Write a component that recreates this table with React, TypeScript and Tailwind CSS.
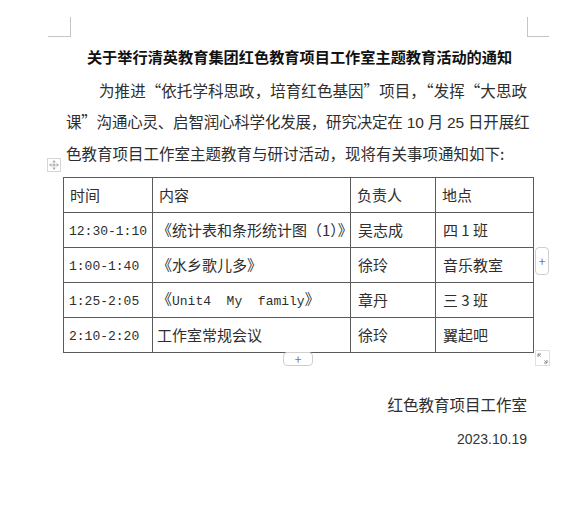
import { Move } from 'lucide-react'

const cjk = "font-['Noto_Sans_CJK_SC',sans-serif]"
const mono = "font-['Liberation_Mono','Noto_Sans_CJK_SC',monospace] text-[13px]"
const latin = "font-['Liberation_Sans',sans-serif]"

interface Row {
  time: string
  content: React.ReactNode
  owner: string
  place: React.ReactNode
}

const rows: Row[] = [
  {
    time: '12:30-1:10',
    content: <>《统计表和条形统计图（1）》</>,
    owner: '吴志成',
    place: <>四 1 班</>,
  },
  { time: '1:00-1:40', content: <>《水乡歌儿多》</>, owner: '徐玲', place: '音乐教室' },
  {
    time: '1:25-2:05',
    content: (
      <>
        《<span className={`${mono} whitespace-pre`}>Unit4  My  family</span>》
      </>
    ),
    owner: '章丹',
    place: <>三 3 班</>,
  },
  { time: '2:10-2:20', content: '工作室常规会议', owner: '徐玲', place: '翼起吧' },
]

function CornerMarks() {
  return (
    <>
      <div className="absolute left-[70px] top-[17px] h-[20px] w-px bg-[#c4c4c4]" />
      <div className="absolute left-[48px] top-[36px] h-px w-[22px] bg-[#c4c4c4]" />
      <div className="absolute left-[527px] top-[17px] h-[20px] w-px bg-[#c4c4c4]" />
      <div className="absolute left-[527px] top-[36px] h-px w-[22px] bg-[#c4c4c4]" />
    </>
  )
}

// Word-style table handles that float over the page
function TableHandles() {
  return (
    <>
      <div className="absolute left-[47px] top-[158px] flex h-[14px] w-[14px] items-center justify-center border border-[#d6d6d6] bg-white text-[#8a8a8a]">
        <Move size={10} strokeWidth={1.6} />
      </div>
      <div className="absolute left-[535px] top-[247px] flex h-[28px] w-[14px] items-center justify-center rounded-sm border border-[#cfcfcf] bg-white text-[12px] leading-none text-[#777]">
        +
      </div>
      <div className="absolute left-[283px] top-[352px] flex h-[14px] w-[30px] items-center justify-center rounded-sm border border-[#cfcfcf] bg-white text-[12px] leading-none text-[#777]">
        +
      </div>
      <div className="absolute left-[535px] top-[350px] flex h-[16px] w-[15px] items-center justify-center border border-[#e0e0e0] bg-white">
        <svg width="11" height="11" viewBox="0 0 11 11" fill="none" stroke="#888" strokeWidth="1">
          <path d="M1 4V1h3M1 1l2.5 2.5M10 7v3H7M10 10L7.5 7.5" />
        </svg>
      </div>
    </>
  )
}

export default function App() {
  return (
    <div className={`relative h-[528px] w-[584px] overflow-hidden bg-white ${cjk} text-[#2e2e2e]`}>
      <CornerMarks />

      <div className="ml-[66px] flex w-[461px] flex-col pt-[44px]">
        <h1 className="pl-[6px] text-center text-[15.2px] font-bold leading-[24px] text-[#111]">
          关于举行清英教育集团红色教育项目工作室主题教育活动的通知
        </h1>

        <div className="mt-[7px] text-[15.5px] leading-[31px]">
          <div className="whitespace-nowrap pl-[33px] text-justify [text-align-last:justify]">
            为推进“依托学科思政，培育红色基因”项目，“发挥“大思政
          </div>
          <div className="whitespace-nowrap text-justify tracking-[-0.2px] [text-align-last:justify]">
            课”沟通心灵、启智润心科学化发展，研究决定在
            <span className={latin}> 10 </span>月<span className={latin}> 25 </span>日开展红
          </div>
          <div className="whitespace-nowrap">色教育项目工作室主题教育与研讨活动，现将有关事项通知如下:</div>
        </div>

        <table className="mt-[8px] -ml-[3px] w-[470px] table-fixed border-collapse text-[15px]">
          <colgroup>
            <col className="w-[89px]" />
            <col className="w-[198px]" />
            <col className="w-[85px]" />
            <col className="w-[98px]" />
          </colgroup>
          <tbody>
            <tr className="h-[35px]">
              {['时间', '内容', '负责人', '地点'].map(h => (
                <td key={h} className="border border-[#5a5a5a] pl-[6px] align-middle">
                  {h}
                </td>
              ))}
            </tr>
            {rows.map(r => (
              <tr key={r.time} className="h-[35px]">
                <td className="border border-[#5a5a5a] pl-[5px] align-middle">
                  <span className={mono}>{r.time}</span>
                </td>
                <td className="overflow-hidden whitespace-nowrap border border-[#5a5a5a] pl-[4px] align-middle">
                  {r.content}
                </td>
                <td className="border border-[#5a5a5a] pl-[7px] align-middle">{r.owner}</td>
                <td className="border border-[#5a5a5a] pl-[7px] align-middle">{r.place}</td>
              </tr>
            ))}
          </tbody>
        </table>

        <div className="mt-[39px] text-right text-[15.5px] leading-[24px]">红色教育项目工作室</div>
        <div className={`mt-[11px] text-right ${latin} text-[14px] leading-[24px] text-[#333]`}>
          2023.10.19
        </div>
      </div>

      <TableHandles />
    </div>
  )
}
